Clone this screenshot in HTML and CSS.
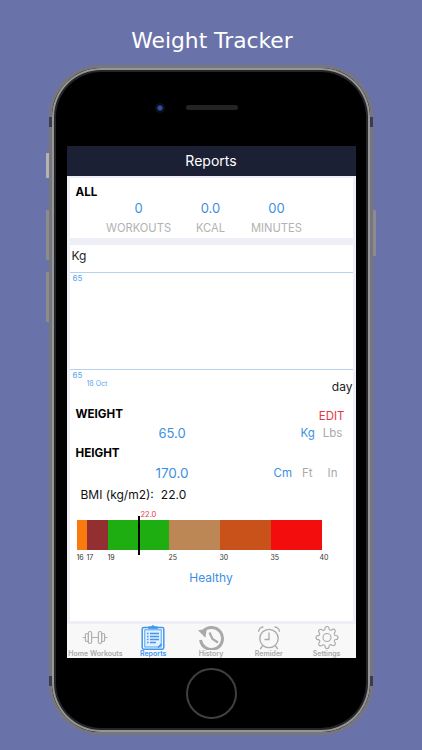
FILE: index.html
```html
<!DOCTYPE html>
<html lang="en">
<head>
<meta charset="utf-8">
<title>Weight Tracker</title>
<link rel="stylesheet" href="styles.css">
</head>
<body>
<h1 class="headline">Weight Tracker</h1>
<div class="phone">
  <span class="side side-mute"></span>
  <span class="side side-up"></span>
  <span class="side side-down"></span>
  <span class="side side-power"></span>
  <span class="band band-tl"></span>
  <span class="band band-tr"></span>
  <span class="band band-bl"></span>
  <span class="band band-br"></span>
  <div class="bezel-top">
    <span class="camera"></span>
    <span class="speaker"></span>
  </div>
  <main class="screen">
    <header class="navbar">Reports</header>
    <div class="content">
      <section class="card card-all">
        <h2 class="heading">ALL</h2>
        <div class="stats">
          <div class="stat stat-a"><span class="stat-value">0</span><span class="stat-label">WORKOUTS</span></div>
          <div class="stat stat-b"><span class="stat-value">0.0</span><span class="stat-label">KCAL</span></div>
          <div class="stat stat-c"><span class="stat-value">00</span><span class="stat-label">MINUTES</span></div>
        </div>
      </section>
      <section class="card card-main">
        <div class="chart">
          <div class="axis-title">Kg</div>
          <div class="plot">
            <span class="tick-y">65</span>
          </div>
          <div class="plot-foot">
            <div class="foot-left">
              <span class="tick-y">65</span>
              <span class="tick-x">18 Oct</span>
            </div>
            <span class="axis-day">day</span>
          </div>
        </div>
        <div class="measures">
          <div class="row-head">
            <h2 class="heading">WEIGHT</h2>
            <span class="edit">EDIT</span>
          </div>
          <div class="row-value">
            <span class="big-value">65.0</span>
            <div class="units units-weight"><span class="unit on">Kg</span><span class="unit">Lbs</span></div>
          </div>
          <div class="row-head row-height">
            <h2 class="heading">HEIGHT</h2>
          </div>
          <div class="row-value row-value-height">
            <span class="big-value">170.0</span>
            <div class="units units-height"><span class="unit on">Cm</span><span class="unit">Ft</span><span class="unit">In</span></div>
          </div>
          <div class="bmi-line"><span>BMI (kg/m2):</span><span>22.0</span></div>
        </div>
        <div class="scale">
          <div class="scale-bar">
            <span class="seg seg-1"></span><span class="seg seg-2"></span><span class="seg seg-3"></span><span class="seg seg-4"></span><span class="seg seg-5"></span><span class="seg seg-6"></span>
            <span class="marker"></span>
            <span class="marker-label">22.0</span>
          </div>
          <div class="scale-ticks">
            <span>16</span><span>17</span><span>19</span><span>25</span><span>30</span><span>35</span><span>40</span>
          </div>
        </div>
        <div class="status">Healthy</div>
      </section>
    </div>
    <nav class="tabbar">
      <div class="tab">
        <svg class="icon" width="28" height="25" viewBox="0 0 28 25" fill="none" stroke="#b0b0b0" stroke-width="1.2">
          <rect x="4.4" y="8.5" width="3" height="8" rx="1.3"/>
          <rect x="7.4" y="6.5" width="3.2" height="12" rx="1.4"/>
          <rect x="17.4" y="6.5" width="3.2" height="12" rx="1.4"/>
          <rect x="20.6" y="8.5" width="3" height="8" rx="1.3"/>
          <path d="M10.6 12.5h6.8M1.5 12.5h2.9M23.6 12.5h2.9"/>
        </svg>
        <span class="tab-label">Home Workouts</span>
      </div>
      <div class="tab active">
        <svg class="icon" width="28" height="25" viewBox="0 0 28 25" fill="none" stroke="#3e97f2" stroke-width="1.5">
          <rect x="3.2" y="2.6" width="21.6" height="21.6" rx="1.6"/>
          <rect x="5.8" y="4.8" width="16.4" height="17.2" fill="#e3effc" stroke-width="0.9"/>
          <path d="M9.5 3.4h9V1.8h-2.6L14 .4l-1.9 1.4H9.5z" fill="#3e97f2" stroke-width="0.8"/>
          <path d="M8 8.5h1.5M11 8.5h9M8 11.5h1.5M11 11.5h9M8 14.5h1.5M11 14.5h9M8 17.5h1.5M11 17.5h6" stroke-width="1.3"/>
          <path d="M22.5 19l-3.5 3.5" stroke-width="1.6"/>
        </svg>
        <span class="tab-label">Reports</span>
      </div>
      <div class="tab">
        <svg class="icon" width="28" height="25" viewBox="0 0 28 25" fill="none" stroke="#a9a9a9" stroke-width="3">
          <path d="M6 6.5A11 11 0 1 1 3.6 15"/>
          <path d="M1 5.2L9.8 4 8.4 12.8z" fill="#a9a9a9" stroke="none"/>
          <path d="M12.5 7.5l3 6.5 5.5 3.5" stroke-width="2.2"/>
        </svg>
        <span class="tab-label">History</span>
      </div>
      <div class="tab">
        <svg class="icon" width="28" height="25" viewBox="0 0 28 25" fill="none" stroke="#a9a9a9" stroke-width="1.3">
          <circle cx="14" cy="13.5" r="9.2"/>
          <path d="M14 7.5v7h-4.5"/>
          <path d="M3.6 6.8A4.6 4.6 0 0 1 8.4 2M24.4 6.8A4.6 4.6 0 0 0 19.6 2"/>
          <path d="M7.6 21l-2.4 3M20.4 21l2.4 3"/>
        </svg>
        <span class="tab-label">Remider</span>
      </div>
      <div class="tab">
        <svg class="icon" width="28" height="25" viewBox="-1 -0.5 26 25" fill="none" stroke="#a9a9a9" stroke-width="1.1">
          <circle cx="12" cy="12" r="4"/>
          <path d="M19.4 15a1.65 1.65 0 0 0 .33 1.82l.06.06a2 2 0 0 1 0 2.83 2 2 0 0 1-2.83 0l-.06-.06a1.65 1.65 0 0 0-1.82-.33 1.65 1.65 0 0 0-1 1.51V21a2 2 0 0 1-2 2 2 2 0 0 1-2-2v-.09A1.65 1.65 0 0 0 9 19.4a1.65 1.65 0 0 0-1.82.33l-.06.06a2 2 0 0 1-2.83 0 2 2 0 0 1 0-2.83l.06-.06a1.65 1.65 0 0 0 .33-1.82 1.65 1.65 0 0 0-1.51-1H3a2 2 0 0 1-2-2 2 2 0 0 1 2-2h.09A1.65 1.65 0 0 0 4.6 9a1.65 1.65 0 0 0-.33-1.82l-.06-.06a2 2 0 0 1 0-2.83 2 2 0 0 1 2.83 0l.06.06a1.65 1.65 0 0 0 1.82.33H9a1.65 1.65 0 0 0 1-1.51V3a2 2 0 0 1 2-2 2 2 0 0 1 2 2v.09a1.65 1.65 0 0 0 1 1.51 1.65 1.65 0 0 0 1.82-.33l.06-.06a2 2 0 0 1 2.83 0 2 2 0 0 1 0 2.83l-.06.06a1.65 1.65 0 0 0-.33 1.82V9a1.65 1.65 0 0 0 1.51 1H21a2 2 0 0 1 2 2 2 2 0 0 1-2 2h-.09a1.65 1.65 0 0 0-1.51 1z"/>
        </svg>
        <span class="tab-label">Settings</span>
      </div>
    </nav>
  </main>
  <div class="bezel-bottom"><span class="home"></span></div>
</div>
</body>
</html>
```
FILE: styles.css
```css
* { box-sizing: border-box; }
html, body { margin: 0; padding: 0; }
body {
  width: 422px;
  height: 750px;
  overflow: hidden;
  background: #6a73a9;
  font-family: Inter, "Liberation Sans", sans-serif;
}
h1, h2 { margin: 0; }

.headline {
  height: 65px;
  padding: 27px 0 0 2px;
  text-align: center;
  color: #fff;
  font: 400 21.8px/28px "DejaVu Sans", sans-serif;
}

.phone {
  position: relative;
  width: 324px;
  height: 670px;
  margin-left: 49px;
  display: flex;
  flex-direction: column;
  align-items: center;
  background: #000;
  border: 3px solid #77777b;
  border-radius: 52px;
  box-shadow: inset 0 0 0 2px #96969a, inset 0 0 0 4px #26262a;
}
.side { position: absolute; background: #8b8b90; }
.side-mute { left: -6px; top: 85px; width: 3px; height: 25px; background: #b4b4b8; border-radius: 1px 0 0 1px; }
.side-up { left: -6px; top: 142px; width: 3px; height: 50px; border-radius: 1px 0 0 1px; }
.side-down { left: -6px; top: 204px; width: 3px; height: 50px; border-radius: 1px 0 0 1px; }
.side-power { right: -6px; top: 142px; width: 3px; height: 46px; border-radius: 0 1px 1px 0; }
.band { position: absolute; width: 3px; height: 10px; background: #3c3d48; }
.band-tl { left: -3px; top: 49px; }
.band-tr { right: -3px; top: 49px; }
.band-bl { left: -3px; top: 608px; }
.band-br { right: -3px; top: 608px; }

.bezel-top {
  height: 78px;
  flex: none;
  width: 100%;
  display: flex;
  justify-content: center;
  align-items: flex-start;
  gap: 21px;
  padding-top: 35px;
  padding-left: 11px;
}
.camera {
  width: 10px;
  height: 10px;
  margin-left: -40px;
  border-radius: 50%;
  background: radial-gradient(circle, #2c4fa8 0 2px, #101420 3px, #0c0d12 5px);
}
.speaker {
  width: 52px;
  height: 5px;
  margin-top: 2px;
  border-radius: 3px;
  background: #232326;
}

.screen {
  width: 289px;
  height: 512px;
  flex: none;
  display: flex;
  flex-direction: column;
  background: #eeeff6;
}
.navbar {
  height: 30px;
  flex: none;
  background: #1c2034;
  color: #fff;
  font-size: 14px;
  line-height: 30px;
  text-align: center;
}
.content {
  flex: 1;
  display: flex;
  flex-direction: column;
  gap: 7px;
  padding: 2px 3px 3px;
  min-height: 0;
}
.card { background: #fff; }
.card-all { height: 60px; flex: none; padding: 7px 6px 0; }
.card-main { flex: 1; display: flex; flex-direction: column; }
.heading {
  color: #000;
  font-size: 11.6px;
  font-weight: 700;
  line-height: 14px;
}

.stats { height: 38px; display: flex; padding-left: 30px; padding-top: 1px; }
.stat { display: flex; flex-direction: column; align-items: center; width: 66px; }
.stat-b { width: 60px; margin-left: 9px; }
.stat-c { width: 66px; margin-left: 3px; }
.stat-value { color: #3d8fe3; font-size: 13px; line-height: 16px; margin-bottom: 4px; }
.stat-label { color: #b2b2b2; font-size: 11.2px; line-height: 16px; white-space: nowrap; }

.chart { flex: none; }
.axis-title { height: 27px; padding: 4px 0 0 2px; font-size: 12px; line-height: 14px; color: #222; }
.plot {
  height: 98px;
  border-top: 1px solid #b5d3f1;
  border-bottom: 1px solid #b5d3f1;
  padding: 1px 0 0 3px;
}
.tick-y { display: block; color: #5aa5f0; font-size: 8px; line-height: 9px; }
.tick-x { display: block; margin-left: 14px; color: #5aa5f0; font-size: 7px; line-height: 8px; }
.plot-foot { display: flex; justify-content: space-between; height: 24px; padding: 0 0 0 3px; }
.foot-left { padding-top: 1px; }
.axis-day { font-size: 12px; line-height: 14px; margin-top: 10px; color: #222; }

.measures { flex: none; padding: 13px 8px 0 6px; }
.row-head { display: flex; justify-content: space-between; height: 14px; }
.edit { color: #e8343f; font-size: 11.5px; line-height: 14px; margin-top: 2px; }
.row-height { margin-top: 3px; }
.row-value { display: flex; height: 20px; margin-top: 2px; align-items: center; }
.row-value-height { margin-top: 3px; }
.big-value { width: 193px; text-align: center; color: #3d8fe3; font-size: 13px; }
.row-value-height .big-value { font-size: 13.5px; }
.units { display: flex; font-size: 11.5px; color: #a9a9a9; }
.units-weight { margin-left: 32px; gap: 8px; }
.units-height { margin-left: 5px; gap: 10px; }
.units-height .unit + .unit + .unit { margin-left: 5px; }
.unit.on { color: #3d8fe3; }
.bmi-line { display: flex; gap: 7px; margin: 5px 0 0 5px; font-size: 12px; line-height: 14px; color: #111; }

.scale { flex: none; width: 258px; margin: 18px 0 0 7px; }
.scale-bar { position: relative; display: grid; grid-template-columns: 10px 21px 61px 51px 51px 51px 13px; height: 30px; }
.seg { display: block; }
.seg-1 { background: #f97b10; }
.seg-2 { background: #942f31; }
.seg-3 { background: #1fae12; }
.seg-4 { background: #bc8754; }
.seg-5 { background: #c9521b; }
.seg-6 { background: #f40d0d; }
.marker { position: absolute; left: 61px; top: -4px; width: 2px; height: 39px; background: #000; }
.marker-label { position: absolute; left: 64px; top: -10px; color: #e8343f; font-size: 7.5px; line-height: 9px; }
.scale-ticks {
  display: grid;
  grid-template-columns: 10px 21px 61px 51px 51px 49px 15px;
  margin-top: 3px;
  font-size: 7px;
  line-height: 9px;
  color: #333;
}
.status { flex: none; margin-top: 8px; text-align: center; color: #3d8fe3; font-size: 12px; line-height: 16px; }

.tabbar {
  height: 34px;
  flex: none;
  display: grid;
  grid-template-columns: repeat(5, 1fr);
  background: #f8f8f8;
}
.tab { display: flex; flex-direction: column; align-items: center; }
.icon { display: block; flex: none; height: 25px; margin-top: 1px; }
.tab-label { color: #a9a9a9; font-size: 7px; font-weight: 600; line-height: 8px; white-space: nowrap; }
.active .tab-label { color: #3e97f2; }

.bezel-bottom { flex: 1; display: flex; justify-content: center; padding-top: 10px; }
.home {
  width: 51px;
  height: 51px;
  border-radius: 50%;
  border: 2px solid #3f3f44;
}
```
